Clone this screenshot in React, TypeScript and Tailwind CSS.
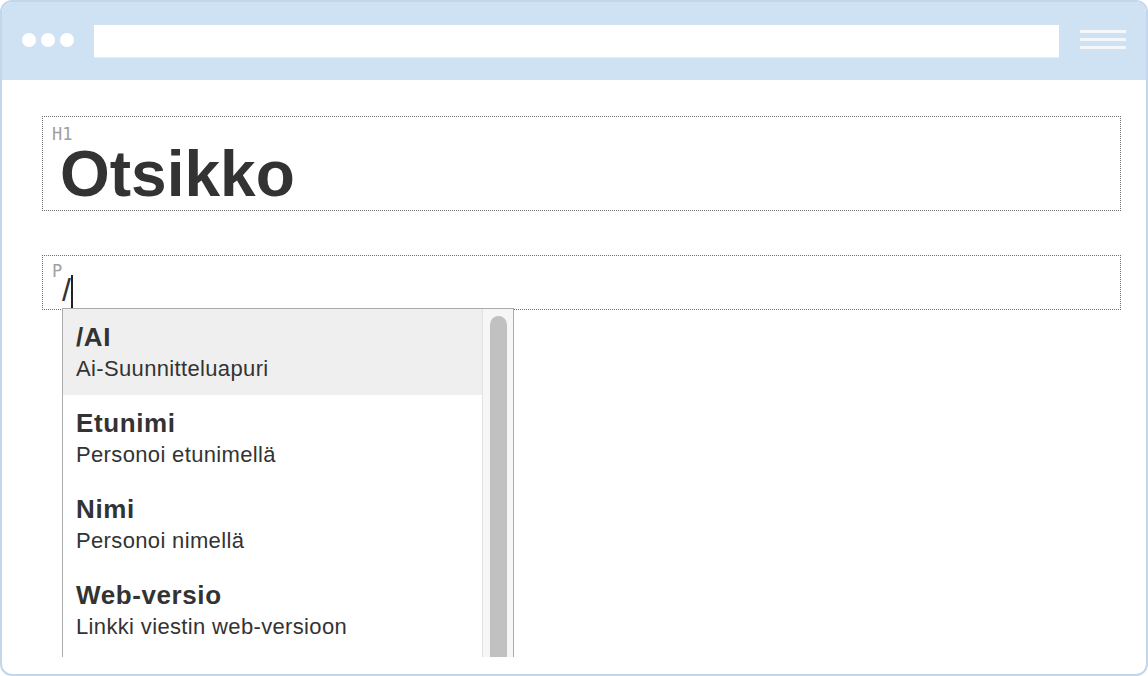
const items = [
  { title: "/AI", desc: "Ai-Suunnitteluapuri", active: true },
  { title: "Etunimi", desc: "Personoi etunimellä" },
  { title: "Nimi", desc: "Personoi nimellä" },
  { title: "Web-versio", desc: "Linkki viestin web-versioon" },
];

function BlockLabel({ children, top }: { children: string; top: string }) {
  return (
    <span
      className={`absolute left-[9px] ${top} font-['DejaVu_Sans_Mono',monospace] text-[17px] leading-[14px] text-[#a0a0a0]`}
    >
      {children}
    </span>
  );
}

export default function App() {
  return (
    <div className="w-[1148px] h-[676px] bg-white font-['Liberation_Sans',Arial,sans-serif] text-[#333]">
      <div className="h-full flex flex-col rounded-[12px] border-2 border-[#c2d7eb] overflow-hidden bg-white">
        {/* browser chrome */}
        <header className="h-[78px] shrink-0 bg-[#cfe2f3] flex items-center pl-[20px] pr-[20px]">
          <div className="flex gap-[5px] mb-[3px]">
            <span className="w-[14px] h-[14px] rounded-full bg-white" />
            <span className="w-[14px] h-[14px] rounded-full bg-white" />
            <span className="w-[14px] h-[14px] rounded-full bg-white" />
          </div>
          <div className="ml-[20px] flex-1 h-[33px] bg-white border-b border-[#e4eef8]" />
          <div className="ml-[21px] w-[46px] flex flex-col gap-[5px] mb-[3px]">
            <span className="h-[3px] bg-[#f4f8fc]" />
            <span className="h-[3px] bg-[#f4f8fc]" />
            <span className="h-[3px] bg-[#f4f8fc]" />
          </div>
        </header>

        {/* editor */}
        <main className="flex-1 pl-[40px] pr-[25px] pt-[36px]">
          <div className="relative h-[95px] border border-dotted border-[#6f6f6f] pt-[25px] pl-[17px]">
            <BlockLabel top="top-[10px]">H1</BlockLabel>
            <h1 className="font-bold text-[64px] leading-[64px] text-[#333]">Otsikko</h1>
          </div>

          <div className="relative mt-[44px] h-[55px] border border-dotted border-[#6f6f6f] pt-[18px] pl-[19px]">
            <BlockLabel top="top-[8px]">P</BlockLabel>
            <div className="flex items-start h-[32px]">
              <span className="text-[32px] leading-[32px] text-[#333]">/</span>
              <span className="mt-[1px] w-[2px] h-[33px] bg-[#222]" />
            </div>

            {/* slash-command menu */}
            <div className="absolute left-[19px] top-[52px] w-[452px] h-[349px] flex bg-white border-t border-x border-[#ababab] overflow-hidden">
              <ul className="flex-1">
                {items.map((it) => (
                  <li
                    key={it.title}
                    className={`pl-[13px] pt-[12px] pb-[12px] ${it.active ? "bg-[#efefef]" : ""}`}
                  >
                    <div className="font-bold text-[26px] leading-[32px] tracking-[0.6px] text-[#333]">{it.title}</div>
                    <div className="mt-[2px] text-[22px] leading-[28px] tracking-[0.35px] text-[#333]">{it.desc}</div>
                  </li>
                ))}
              </ul>
              <div className="w-[31px] shrink-0 bg-[#f6f6f6] border-l border-[#e2e2e2] pt-[7px] flex justify-center">
                <span className="w-[17px] h-[400px] rounded-full bg-[#c1c1c1]" />
              </div>
            </div>
          </div>
        </main>
      </div>
    </div>
  );
}
